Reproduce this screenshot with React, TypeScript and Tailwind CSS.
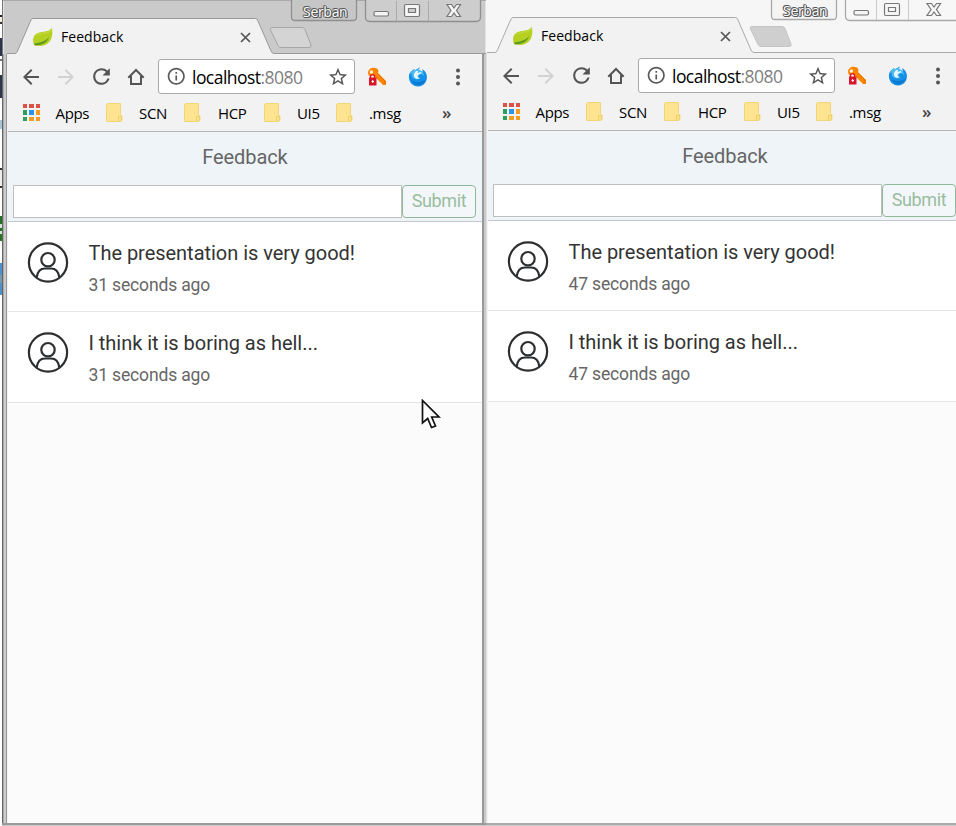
import React from "react";
import { MdArrowBack, MdArrowForward, MdRefresh, MdInfoOutline, MdStarBorder } from "react-icons/md";

const Leaf = () => (
  <svg width="22" height="20" viewBox="0 0 22 20" className="block shrink-0">
    <path d="M20 1C21 8 20 15 13 18C8 20 4 18 2 18C1 15 0 10 4 7C8 4 16 6 20 1Z" fill="#b6d022" />
    <path d="M2 16.5C8 16 14 14 17 10C16 15 11 18 3 18.5Z" fill="#5f9a1d" />
    <path d="M5 7C9 4.500 16 6 19.500 2L20 4C16 8 8 7 4 9Z" fill="#c0d633" />
  </svg>
);

const Folder = () => (
  <svg width="17" height="19" viewBox="0 0 17 19" className="block shrink-0">
    <path d="M1.5 .5H14.5V11.5L16 13V17.5L14.5 18.5H.5V1.5Z" fill="#fee391" stroke="#f0d67a" />
    <path d="M12.5 17.5V13.5H15.5V17L14 18.5Z" fill="#fbe38d" stroke="#edcf6c" />
  </svg>
);

const appColors = ["#dd5144", "#dd5144", "#dd5144", "#2e9e5b", "#2b94e8", "#f39c24", "#2e9e5b", "#f39c24", "#f39c24"];

const Apps = () => (
  <div className="grid w-[17px] shrink-0 grid-cols-3 gap-x-[2px] gap-y-[2px]">
    {appColors.map((c, i) => (
      <i key={i} className="h-[4.400px] w-[4.400px]" style={{ background: c }} />
    ))}
  </div>
);

const Home = () => (
  <svg width="18" height="18" viewBox="0 0 18 18" className="block shrink-0" fill="none" stroke="#555" strokeWidth="2">
    <path d="M1.3 9.7L9 2L16.7 9.7M4 8V16H14V8" />
  </svg>
);

const KeyIcon = () => (
  <svg width="20" height="20" viewBox="0 0 20 20" className="block shrink-0">
    <path d="M1 6C1 2 5 0 8 1C11 1 12 4 11 6L19 14V18H16L8 10C4 11 1 9 1 6Z" fill="#fb8500" />
    <path d="M11 7L18 14V17" fill="none" stroke="#e86d00" />
    <circle cx="4.4" cy="5" r="1.8" fill="#fff2dc" />
    <path d="M3.5 11V9.5C3.5 7 7.5 7 7.5 9.5V11" fill="#fff" stroke="#d91c2c" strokeWidth="1.5" />
    <rect x="2" y="10.5" width="7.5" height="8" fill="#d9152a" />
    <path d="M5.7 13V16M4.5 14.5H7" stroke="#fff" strokeWidth="1" />
  </svg>
);

const Globe = () => (
  <svg width="20" height="20" viewBox="0 0 20 20" className="block shrink-0">
    <path d="M1 8C0 15 5 19.500 10 19.500C16 19.500 20 14 18.700 8C18 5 16 3 14 2L15 5L11 3L11.500 0.500L6 4L6.500 2C3.500 3.500 1.500 5.500 1 8Z" fill="#158fe8" />
    <path d="M1.500 8C2.500 4.500 5 3 6.500 2L6 4L11.500 .5L11 3L15 5L16 9C13 6 11 7 10.500 9.500C11 11 12 11 13 10.500C11 13 7 13 5 11C4 10 3.500 8 4 6Z" fill="#4cbcf3" />
    <path d="M6 7L8 4L10 4L9.500 6L13 5L13.500 6.500C11 6.500 9.500 8 9.500 10L11.500 11.500C8 12.500 5.500 10.500 6 7Z" fill="#e9f8ff" />
    <path d="M3 13C7 16 13 16 18 12C16 18 8 22 3 13Z" fill="#0b79cf" />
  </svg>
);

const Person = () => (
  <svg width="42" height="42" viewBox="0 0 42 42" className="block shrink-0" fill="none" stroke="#2d2f30" strokeWidth="2.2">
    <circle cx="21" cy="20.500" r="19.100" />
    <circle cx="21" cy="17.700" r="6.700" />
    <path d="M9.700 35.500C10.500 29 14 26.500 18 26.500H24C28 26.500 31.500 29 32.300 35.500" />
  </svg>
);

const TitleBar = ({ active }: { active: boolean }) => {
  const line = active ? "#999" : "#aaa";
  const edge = active ? "#8f8f8f" : "#a8a8a8";
  return (
    <div className={`relative shrink-0 overflow-hidden ${active ? "h-[54px] bg-[#cacaca]" : "h-[53px] bg-[#f6f6f6]"}`}>
      <svg
        height="54"
        className={`absolute left-0 ${active ? "top-0" : "-top-px"}`}
        width={active ? 484 : 488}
        viewBox={active ? "2 0 484 54" : "6 0 488 54"}
      >
        {active && <path d="M2 0H486V1H2Z" fill="#a9a9a9" />}
        {active && <path d="M2 0H3V54H2Z" fill="#777" />}
        {active && <path d="M3 1H4V54H3ZM485 1H486V54H485Z" fill="#e2e2e2" />}
        <path d="M7 54V53.500H15Q16.500 53.500 17.500 51L30.500 21Q31.500 18.500 33 18.500H255.500Q257 18.500 258 21L271 51Q272 53.500 274 53.500H494V54Z" fill="#f2f2f2" />
        <path d="M7 53.500H15Q16.500 53.500 17.500 51L30.500 21Q31.500 18.500 33 18.500H255.500Q257 18.500 258 21L271 51Q272 53.500 274 53.500H494" fill="none" stroke={line} />
        <path d="M272 27.500H302Q304 27.500 305 29.500L311 45Q312 47.500 309 47.500H281Q279 47.500 278 45.500L270.500 30Q269.500 27.500 272 27.500Z" fill={active ? "#d4d4d4" : "#cfcfcf"} stroke={active ? "#a7a7a7" : "#c4c4c4"} />
        <path d="M291.500 0V17Q291.500 20.500 295 20.500H353Q356.500 20.500 356.500 17V0" fill={active ? "#c6c6c6" : "#f4f4f4"} stroke={edge} strokeWidth="1.3" />
        <path d="M365.500 0V17Q365.500 21.500 370 21.500H476Q480.500 21.500 480.500 17V0" fill={active ? "#cdcdcd" : "#f7f7f7"} stroke={edge} strokeWidth="1.3" />
        <path d="M396.500 1V21M428.500 1V21" stroke={active ? "#aaa" : "#c9c9c9"} />
        <g fill="#f5f5f5" stroke="#777" strokeWidth="1.2">
          <rect x="374" y="11.500" width="14.500" height="4.500" rx="1.500" />
          <path fillRule="evenodd" d="M406 4.500H418Q419.500 4.500 419.500 6V15Q419.500 16.500 418 16.500H406Q404.500 16.500 404.500 15V6Q404.500 4.500 406 4.500ZM408.500 8.500V12.500H415.500V8.500Z" />
          <path d="M447 4.500H451.500L454 8L456.500 4.500H460.500L456.500 10.500L460.500 16.500H456.500L454 13L451.500 16.500H447L451 10.500Z" />
        </g>
      </svg>
      <div className={`relative flex font-['Open_Sans','Noto_Sans',sans-serif] text-black ${active ? "pl-[30px]" : "-mt-px pl-[26px]"}`}>
        <div className="mt-[27px] flex h-5 w-[261px] items-center">
          <Leaf />
          <span className="ml-[7px] w-[64px] text-[14px] leading-5 tracking-[0.050px] whitespace-nowrap">Feedback</span>
          <svg width="11" height="11" viewBox="0 0 11 11" className="ml-[114.500px] block shrink-0">
            <path d="M1 1L10 10M10 1L1 10" stroke="#555" strokeWidth="1.700" />
          </svg>
        </div>
        <span className="mt-[3px] ml-[10px] text-[14px] leading-[18px] tracking-[-0.300px] text-white [text-shadow:-1px_0_#555,1px_0_#555,0_-1px_#555,0_1px_#555,1px_1px_#555,-1px_-1px_#777]">
          Serban
        </span>
      </div>
    </div>
  );
};

const marks = [
  { n: "SCN", f: "ml-[16px]", t: "ml-[16px] w-[30px]" },
  { n: "HCP", f: "ml-[15px]", t: "ml-[17px] w-[30px]" },
  { n: "UI5", f: "ml-[16px]", t: "ml-[16px] w-[24px]" },
  { n: ".msg", f: "ml-[15px]", t: "ml-[16px] w-[33px]" },
];

const Toolbar = () => (
  <div className="h-[78px] w-[474px] shrink-0 border-b border-[#b7b7b7] bg-[#f2f2f2] font-['Open_Sans','Noto_Sans',sans-serif] text-black">
    <div className="flex h-[45px] items-center pl-[11px]">
      <MdArrowBack size={24} color="#555" className="shrink-0" />
      <MdArrowForward size={24} color="#d2d2d2" className="ml-[11px] shrink-0" />
      <MdRefresh size={25} color="#555" className="ml-[11px] shrink-0" />
      <span className="ml-[13px]"><Home /></span>
      <div className="ml-[13px] flex h-[35px] w-[197px] shrink-0 items-center rounded-[3px] border border-[#a9a9a9] bg-white pl-[7px]">
        <MdInfoOutline size={20.5} color="#5a5a5a" className="shrink-0" />
        <span className="ml-[5.500px] w-[116px] text-[17.500px] leading-6 tracking-[-0.540px] whitespace-nowrap">
          localhost<span className="text-[#808080]">:8080</span>
        </span>
        <MdStarBorder size={22} color="#555" className="ml-[19px] shrink-0" />
      </div>
      <span className="ml-[12px]"><KeyIcon /></span>
      <span className="ml-[21px]"><Globe /></span>
      <svg width="4" height="18" viewBox="0 0 4 18" fill="#555" className="ml-[28px] block shrink-0">
        <circle cx="2" cy="2.500" r="2" /><circle cx="2" cy="9" r="2" /><circle cx="2" cy="15.500" r="2" />
      </svg>
    </div>
    <div className="flex h-[27px] items-center pl-[15px] text-[15px] leading-5 tracking-[-0.350px] whitespace-nowrap">
      <Apps />
      <span className="ml-[15.500px] w-[34.500px]">Apps</span>
      {marks.map((m) => (
        <React.Fragment key={m.n}>
          <span className={m.f}><Folder /></span>
          <span className={m.t}>{m.n}</span>
        </React.Fragment>
      ))}
      <span className="ml-[40px] text-[17px] font-semibold text-[#444]">»</span>
    </div>
  </div>
);

const Row = ({ text, ago, tall }: { text: string; ago: string; tall?: boolean }) => (
  <div className={`flex w-[474px] shrink-0 border-b border-[#e5e5e5] bg-white pl-[19px] ${tall ? "h-[91px]" : "h-[90px]"}`}>
    <div className="mt-[20px]"><Person /></div>
    <div className="ml-[19.500px] pt-[18px] whitespace-nowrap">
      <div className="text-[20px] leading-[26px] tracking-[-0.030px] text-[#333]">{text}</div>
      <div className="mt-[7px] text-[17.500px] leading-[24px] tracking-[-0.150px] text-[#666]">{ago}</div>
    </div>
  </div>
);

const Page = ({ ago }: { ago: string }) => (
  <div className="flex min-h-0 w-[474px] flex-1 flex-col bg-[#fbfbfb] font-[Roboto,'Liberation_Sans',sans-serif]">
    <div className="h-[90px] shrink-0 border-b border-[#c4c8cc] bg-[#eff4f9]">
      <div className="h-[53px] pt-[13px] text-center text-[20px] leading-6 tracking-[-0.1px] text-[#666]">Feedback</div>
      <div className="flex pl-[5px]">
        <input className="h-[33px] w-[389px] border border-[#bfbfbf] bg-white outline-none" />
        <button className="h-[33px] w-[74px] rounded-[4px] border border-[#8fb898] bg-[#f4f7fa] pb-[2px] text-[18px] leading-none tracking-[-0.350px] text-[#99bd9f]">
          Submit
        </button>
      </div>
    </div>
    <Row text="The presentation is very good!" ago={ago} />
    <Row text="I think it is boring as hell..." ago={ago} tall />
  </div>
);

const strips = [
  "h-[15px] bg-white", "h-[2px] bg-[#222]", "h-[5px] bg-[#f7efd9]", "h-[2px] bg-[#333]", "h-[14px] bg-white",
  "h-[18px] bg-[#2c3648]", "h-[3px] bg-white", "h-[2px] bg-[#777]", "h-[14px] bg-white", "h-[23px] bg-[#2c3648]",
  "h-[22px] bg-white", "h-[9px] bg-[#a6c6de]", "h-[39px] bg-white", "h-[2px] bg-[#333]", "h-[16px] bg-[#eee]",
  "h-[2px] bg-[#333]", "h-[28px] bg-white", "h-[8px] bg-[#267326]", "h-[4px] bg-[#d5e5d5]", "h-[3px] bg-[#267326]",
  "h-[3px] bg-[#d5e5d5]", "h-[7px] bg-[#267326]", "h-[22px] bg-white", "h-[12px] bg-[#4b91cc]", "h-[8px] bg-[#7799af]",
  "h-[12px] bg-[#4b91cc]",
];

export default function App() {
  return (
    <div className="flex h-[826px] w-[956px] overflow-hidden bg-white">
      <div className="flex w-[2px] shrink-0 flex-col">
        {strips.map((s, i) => <i key={i} className={`block shrink-0 ${s}`} />)}
      </div>
      <div className="flex w-[484px] shrink-0 flex-col">
        <TitleBar active />
        <div className="flex min-h-0 flex-1">
          <i className="w-px bg-[#666]" /><i className="w-px bg-[#aaa]" /><i className="w-[2px] bg-[#cacaca]" />
          <i className="w-px bg-[#999]" /><i className="w-px bg-[#f2f2f2]" />
          <div className="flex w-[474px] shrink-0 flex-col"><Toolbar /><Page ago="31 seconds ago" /></div>
          <i className="w-[2px] bg-[#999]" /><i className="w-[2px] bg-[#cacaca]" />
        </div>
        <i className="h-[2px] shrink-0 bg-[#999]" /><i className="h-px shrink-0 bg-[#ccc]" />
      </div>
      <div className="flex w-[470px] shrink-0 flex-col overflow-hidden">
        <TitleBar active={false} />
        <div className="flex min-h-0 flex-1">
          <i className="w-px shrink-0 bg-[#ddd]" /><i className="w-px shrink-0 bg-[#f5f5f5]" />
          <div className="flex w-[474px] shrink-0 flex-col"><Toolbar /><Page ago="47 seconds ago" /></div>
        </div>
        <i className="h-[2px] shrink-0 bg-[#aaa]" /><i className="h-px shrink-0 bg-[#ccc]" />
      </div>
      <svg width="20" height="32" viewBox="0 0 20 32" className="absolute top-[399px] left-[421px]">
        <path d="M1.500 1.500V24L6.700 19.500L10.500 28.500L14.500 27L10.700 18H18Z" fill="#fff" stroke="#111" strokeWidth="1.700" />
      </svg>
    </div>
  );
}
